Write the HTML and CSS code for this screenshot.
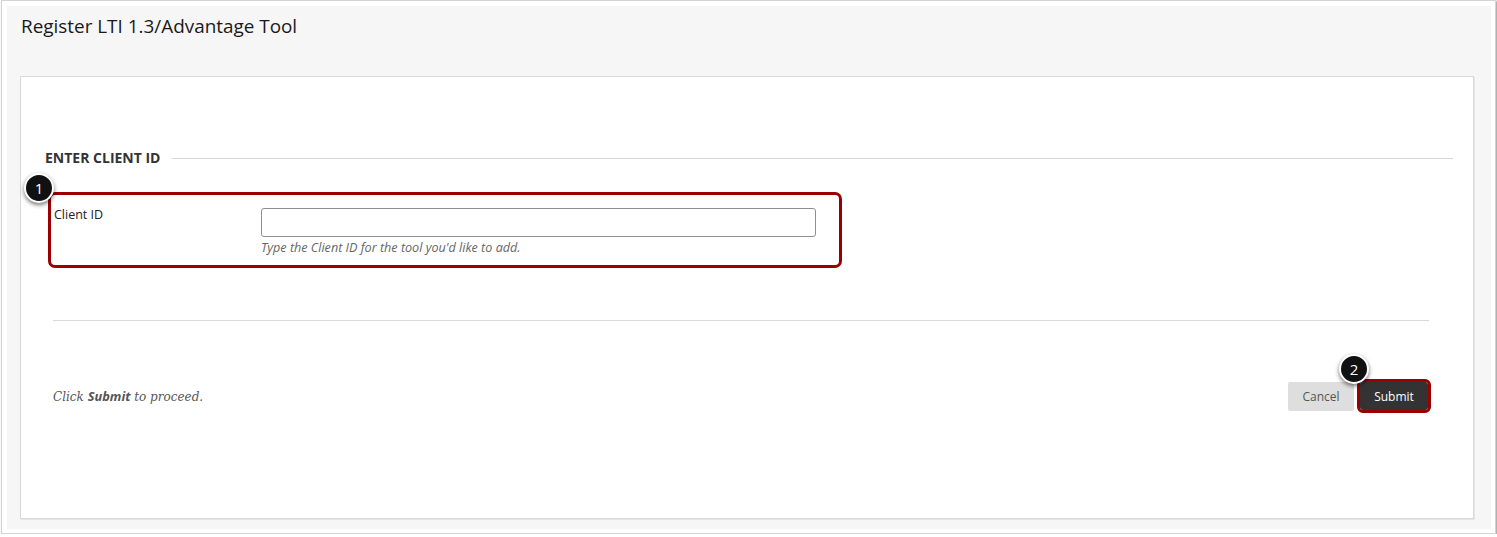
FILE: index.html
```html
<!DOCTYPE html>
<html lang="en">
<head>
  <meta charset="UTF-8">
  <title>Register LTI 1.3/Advantage Tool</title>
  <link rel="stylesheet" href="styles.css">
</head>
<body>

<div class="frame">
  <div class="panel">
    <h1 class="page-title">Register LTI 1.3/Advantage Tool</h1>

    <div class="form-box">
      <!-- Step 1: client id -->
      <div class="section-head">
        <h2>Enter Client ID</h2>
        <span class="section-rule"></span>
      </div>

      <div class="callout field-row">
        <span class="badge badge-one">1</span>
        <label class="field-label" for="client-id">Client ID</label>
        <div class="field-control">
          <input type="text" id="client-id" class="text-input">
          <div class="field-hint">Type the Client ID for the tool you'd like to add.</div>
        </div>
      </div>

      <div class="divider"></div>

      <!-- Step 2: submit -->
      <div class="submit-row">
        <p class="submit-note">Click <strong>Submit</strong> to proceed.</p>
        <div class="buttons">
          <button class="btn btn-cancel">Cancel</button>
          <div class="callout-btn">
            <span class="badge badge-two">2</span>
            <button class="btn btn-submit">Submit</button>
          </div>
        </div>
      </div>
    </div>
  </div>
</div>

</body>
</html>
```

FILE: styles.css
```css
/* basics */
* {
  box-sizing: border-box;
}
html, body {
  margin: 0;
  padding: 0;
  background: #fff;
  font-family: "Open Sans", "Liberation Sans", sans-serif;
  color: #262626;
}

/* screenshot frame */
.frame {
  width: 1495px;
  height: 534px;
  margin-left: 1px;
  padding: 5px 4px 4px 5px;
  border: 1px solid #d4d4d4;
  box-shadow: 1px 1px 2px rgba(0, 0, 0, 0.45);
  background: #fff;
}
.panel {
  height: 100%;
  background: #f6f6f6;
  padding: 7px 17px 10px 13px;
  display: flex;
  flex-direction: column;
}
.page-title {
  margin: 0 0 0 1px;
  font-size: 18.9px;
  font-weight: 400;
  line-height: 26px;
  color: #1a1a1a;
  height: 63px;
}

/* white form card */
.form-box {
  flex: 1;
  background: #fff;
  border: 1px solid #d9d9d9;
  box-shadow: 1px 1px 0 #e6e6e6;
  padding: 72px 20px 0 0;
}
.section-head {
  display: flex;
  align-items: center;
  padding-left: 24px;
  height: 18px;
}
.section-head h2 {
  margin: 0;
  font-size: 14px;
  line-height: 18px;
  font-weight: 700;
  text-transform: uppercase;
  color: #333;
}
.section-rule {
  flex: 1;
  height: 1px;
  background: #d6d6d6;
  margin-left: 12px;
}

/* red highlight boxes */
.callout {
  position: relative;
  width: 794px;
  margin: 25px 0 0 27px;
  border: 3px solid #9a0000;
  border-radius: 7px;
}
.badge {
  position: absolute;
  width: 30px;
  height: 30px;
  border-radius: 50%;
  background: #111;
  border: 2px solid #fff;
  box-shadow: 0 2px 4px rgba(0, 0, 0, 0.55);
  color: #fff;
  font-size: 15px;
  line-height: 26px;
  text-align: center;
  z-index: 2;
}
.badge-one {
  left: -27px;
  top: -22px;
}
.badge-two {
  left: -21px;
  top: -28px;
}

.field-row {
  display: flex;
  padding: 0 23px 9px 3px;
}
.field-label {
  width: 207px;
  padding-top: 11px;
  font-size: 12.5px;
  line-height: 18px;
  color: #222;
}
.field-control {
  flex: 1;
  padding-top: 13px;
}
.text-input {
  display: block;
  width: 100%;
  height: 29px;
  border: 1px solid #8f8f8f;
  border-radius: 3px;
  background: #fff;
}
.field-hint {
  margin-top: 3px;
  font-size: 12.6px;
  line-height: 16px;
  font-style: italic;
  color: #666;
}

.divider {
  height: 1px;
  background: #d9d9d9;
  margin: 52px 24px 0 32px;
}

/* submit row */
.submit-row {
  display: flex;
  align-items: center;
  justify-content: space-between;
  margin-top: 58px;
  padding: 0 22px 0 32px;
}
.submit-note {
  margin: 0;
  font-family: "DejaVu Serif", "Liberation Serif", serif;
  font-style: italic;
  font-size: 12px;
  color: #555;
}
.submit-note strong {
  font-family: "Open Sans", "Liberation Sans", sans-serif;
  font-size: 12.8px;
  font-weight: 700;
}
.buttons {
  display: flex;
  align-items: center;
  gap: 3px;
}
.btn {
  font-family: "Open Sans", "Liberation Sans", sans-serif;
  font-size: 12px;
  border: none;
  cursor: pointer;
}
.btn-cancel {
  width: 66px;
  height: 29px;
  background: #dedede;
  color: #555;
  border-radius: 2px;
}
.callout-btn {
  position: relative;
  border: 3px solid #9a0000;
  border-radius: 6px;
}
.btn-submit {
  display: block;
  width: 68px;
  height: 28px;
  background: #333;
  color: #fff;
  border-radius: 3px;
}
```
